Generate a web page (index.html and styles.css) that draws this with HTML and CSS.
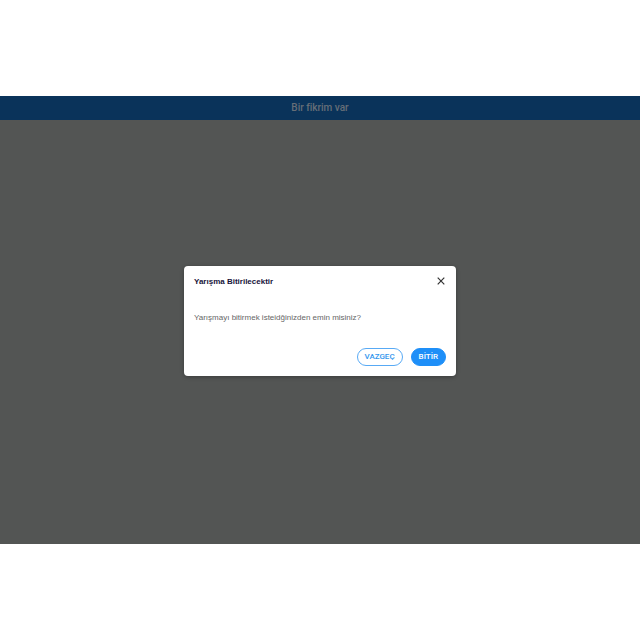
FILE: index.html
```html
<!DOCTYPE html>
<html lang="tr">
<head>
<meta charset="utf-8">
<meta name="viewport" content="width=device-width, initial-scale=1">
<title>Bir fikrim var</title>
<link rel="stylesheet" href="styles.css">
</head>
<body>
<div class="screen">
  <header class="topbar">
    <h1 class="topbar-title">Bir fikrim var</h1>
  </header>
  <main class="stage">
    <section class="dialog" role="dialog" aria-modal="true" aria-labelledby="dialog-title" aria-describedby="dialog-text">
      <div class="dialog-head">
        <h2 class="dialog-title" id="dialog-title">Yarışma Bitirilecektir</h2>
        <button class="close" type="button" aria-label="Kapat">
          <svg viewBox="0 0 10 10" aria-hidden="true"><path d="M1.7 1.7 8.3 8.3M8.3 1.7 1.7 8.3"/></svg>
        </button>
      </div>
      <p class="dialog-text" id="dialog-text">Yarışmayı bitirmek isteidğinizden emin misiniz?</p>
      <div class="actions">
        <button class="btn btn-outline" type="button">VAZGEÇ</button>
        <button class="btn btn-filled" type="button">BİTİR</button>
      </div>
    </section>
  </main>
</div>
</body>
</html>
```

FILE: styles.css
```css
* {
  box-sizing: border-box;
}

body {
  margin: 0;
  min-height: 100vh;
  display: grid;
  align-items: center;
  background: #fff;
  font-family: "Liberation Sans", Arial, sans-serif;
}

h1,
h2,
p {
  margin: 0;
}

.screen {
  display: flex;
  flex-direction: column;
  min-height: 70vh;
  background: #535554;
}

.topbar {
  padding: 4px;
  background: #0a335a;
  text-align: center;
}

.topbar-title {
  color: #666e77;
  font: 500 10px/16px Roboto, sans-serif;
}

.stage {
  flex: 1;
  display: grid;
  place-items: center;
  padding: 0 8px 22px;
}

.dialog {
  width: 100%;
  max-width: 272px;
  padding: 10px;
  border-radius: 4px;
  background: #fff;
  box-shadow: 0 1px 4px rgba(0, 0, 0, 0.3);
}

.dialog-head {
  display: flex;
  align-items: flex-start;
  justify-content: space-between;
}

.dialog-title {
  color: #17133a;
  font-size: 8px;
  line-height: 12px;
}

.close {
  width: 10px;
  height: 10px;
  padding: 0;
  border: 0;
  background: none;
}

.close svg {
  display: block;
  width: 10px;
  height: 10px;
  fill: none;
  stroke: #333;
  stroke-width: 1.2;
}

.dialog-text {
  padding: 24px 0;
  color: #666;
  font-size: 8px;
  line-height: 12px;
}

.actions {
  display: flex;
  justify-content: flex-end;
  gap: 8px;
}

.btn {
  height: 18px;
  padding: 0 7px;
  border: 1px solid #1e8ff8;
  border-radius: 9px;
  font: 500 8px/16px Roboto, sans-serif;
}

.btn-outline {
  border-color: #58aaf5;
  background: #fff;
  color: #3397ee;
}

.btn-filled {
  background: #1e8ff8;
  color: #fff;
}
```
